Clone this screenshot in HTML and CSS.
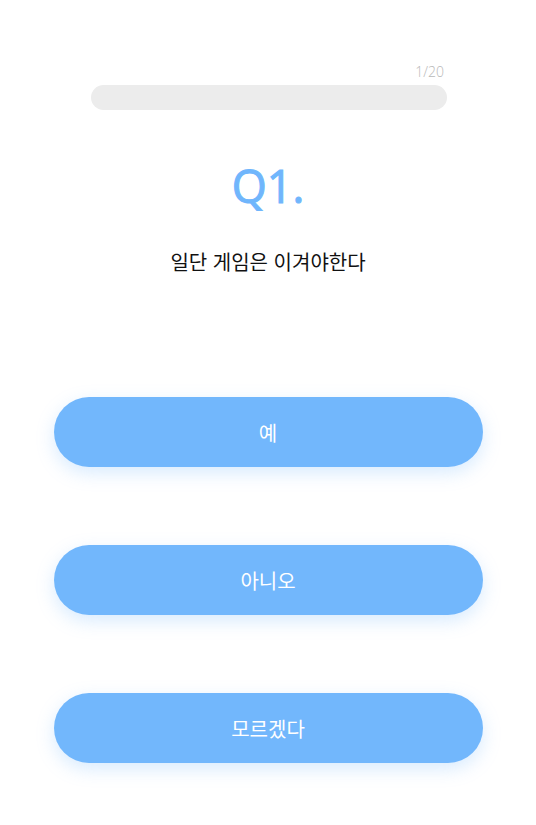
FILE: index.html
```html
<!DOCTYPE html>
<html lang="ko">
<head>
  <meta charset="UTF-8" />
  <title>질문</title>
  <link rel="stylesheet" href="styles.css">
</head>
<body>
  <div class="container">
    <div class="progress">
      <div class="progress-count">1/20</div>
      <div class="progress-bar"></div>
    </div>

    <h1 class="q-num">Q1.</h1>
    <p class="q-text">일단 게임은 이겨야한다</p>

    <div class="answers">
      <button class="answer">예</button>
      <button class="answer">아니오</button>
      <button class="answer">모르겠다</button>
    </div>
  </div>
</body>
</html>
```

FILE: styles.css
```css
body {
  font-family: 'Open Sans', 'Noto Sans CJK KR', sans-serif;
  margin: 0;
  padding: 0;
  background: #ffffff;
}

.container {
  width: 536px;
  padding: 62px 0 40px;
}

.progress {
  width: 356px;
  margin: 0 auto;
  padding-left: 2px;
}

.progress-count {
  text-align: right;
  font-size: 14px;
  font-weight: 300;
  color: #b8b8b8;
  line-height: 19px;
  padding-right: 3px;
  margin-bottom: 4px;
}

.progress-bar {
  height: 25px;
  border-radius: 13px;
  background: #ececec;
}

.q-num {
  margin: 51px 0 0;
  text-align: center;
  font-size: 45px;
  font-weight: 400;
  line-height: 50px;
  color: #70b6fc;
  -webkit-text-stroke: 1.1px #70b6fc;
}

.q-text {
  margin: 37px 0 0;
  text-align: center;
  font-family: 'Noto Sans CJK KR', sans-serif;
  font-size: 20px;
  line-height: 27px;
  color: #111;
}

.answers {
  display: flex;
  flex-direction: column;
  align-items: center;
  gap: 78px;
  margin-top: 122px;
}

.answer {
  width: 429px;
  height: 70px;
  border: none;
  border-radius: 35px;
  background: #72b7fc;
  color: #ffffff;
  font-family: 'Noto Sans CJK KR', sans-serif;
  font-size: 20px;
  box-shadow: 0 6px 18px rgba(114,183,252,0.28);
  cursor: pointer;
}
```
